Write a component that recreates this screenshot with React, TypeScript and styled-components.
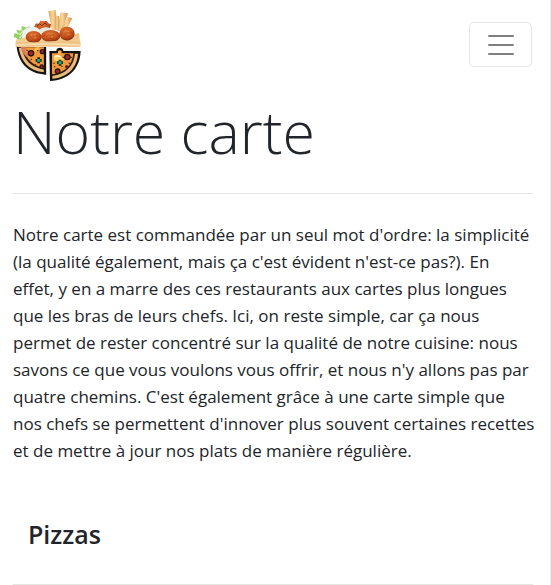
import React from 'react';
import styled, { createGlobalStyle } from 'styled-components';

const GlobalStyle = createGlobalStyle`
  * { box-sizing: border-box; }
  body {
    margin: 0;
    background: #fff;
    color: #212529;
    font-family: "Segoe UI", "Open Sans", "Noto Sans", sans-serif;
    font-size: 17px;
    line-height: 27px;
  }
`;

const Page = styled.div`
  min-height: 100vh;
  padding: 8px 14px 0 13px;
  border-right: 1px solid #efefef;
  overflow: hidden;
`;

const Navbar = styled.nav`
  display: flex;
  align-items: flex-start;
  justify-content: space-between;
  margin-right: 3px;
`;

const Brand = styled.a`
  display: block;
  line-height: 0;
`;

const Toggler = styled.button`
  display: flex;
  align-items: center;
  justify-content: center;
  width: 63px;
  height: 45px;
  padding: 0;
  margin: 14px 1px 0 0;
  background: transparent;
  border: 1px solid #e5e5e5;
  border-radius: 5px;
  cursor: pointer;
`;

const Title = styled.h1`
  margin: 12px 0 24px;
  font-size: 59px;
  font-weight: 300;
  line-height: 75px;
`;

const Rule = styled.hr`
  margin: 0 3px 0 0;
  border: 0;
  border-top: 1px solid #e5e5e5;
`;

const Intro = styled.p`
  margin: 27px 0 54px;
`;

const Section = styled.section`
  display: flex;
  flex-direction: column;
  gap: 34px;
`;

const SectionTitle = styled.h2`
  margin: 0;
  padding: 0 15px;
  font-size: 25px;
  font-weight: 600;
  line-height: 32px;
`;

function Pepper({ x, y, r = 8 }: { x: number; y: number; r?: number }) {
  return <circle cx={x} cy={y} r={r} fill="#9c2a26" stroke="#2b1511" strokeWidth="4" />;
}

function Olive({ x, y }: { x: number; y: number }) {
  return (
    <>
      <path d={`M${x - 4} ${y - 9}h8v5h5v8h-5v5h-8v-5h-5v-8h5z`} fill="#142b20" />
      <circle cx={x} cy={y} r="5" fill="#27a775" />
    </>
  );
}

function Ball({ x, y, rx, ry }: { x: number; y: number; rx: number; ry: number }) {
  return (
    <g>
      <ellipse cx={x} cy={y} rx={rx} ry={ry} fill="url(#fried)" />
      <path
        d={`M${x - rx + 5} ${y + 2}l7-5 5 6 6-8 7 5 5-6 4 7M${x - 9} ${y + 10}l7-4 6 4 7-6`}
        fill="none"
        stroke="#8c2c10"
        strokeWidth="2"
        opacity=".5"
      />
      <path d={`M${x - 10} ${y - 4}l5-4m6 3 5-3m-4 11 5-2`} stroke="#e88a45" strokeWidth="3" />
    </g>
  );
}

function Logo() {
  return (
    <svg width="72" height="74" viewBox="39 24 216 222" role="img" aria-label="Accueil">
      <defs>
        <radialGradient id="fried" cx="45%" cy="35%" r="65%">
          <stop offset="0" stopColor="#e07a35" />
          <stop offset=".6" stopColor="#c9531d" />
          <stop offset="1" stopColor="#842810" />
        </radialGradient>
        <linearGradient id="board" x1="0" y1="0" x2="0" y2="1">
          <stop offset="0" stopColor="#edbd7b" />
          <stop offset="1" stopColor="#f7d8a5" />
        </linearGradient>
        <linearGradient id="stick">
          <stop offset="0" stopColor="#dfa45c" />
          <stop offset=".5" stopColor="#fbd799" />
          <stop offset="1" stopColor="#cf8a45" />
        </linearGradient>
      </defs>
      <g fill="url(#stick)">
        <path d="M145 34l22-4 6 54-17 10z" />
        <path d="M182 37l22 3-18 54-16-3z" />
        <path d="M202 51l15 3-19 38-14-7z" />
        <path d="M168 47l9 1-1 44-10-2z" />
      </g>
      <path d="M42 101l11-3-4-9 15 3 1-14 14 5 10-5 1 38-36 7-3-9-9-2z" fill="#92cf67" />
      <path d="M49 99l12 4 9-13m-12 24 14-13" stroke="#d7efb5" strokeWidth="4" fill="none" />
      <path d="M102 82l6-12 8 1 6-9 8 2 10-1 5 7 8 3-4 17-22 6-18-3z" fill="url(#fried)" />
      <path d="M111 78l8-6 7 5 9-8 7 7" fill="none" stroke="#793015" strokeWidth="3" />
      <path d="M68 97c6-19 45-24 54-3l-5 30H65z" fill="#f0f1ea" />
      <path d="M116 91c13-14 38-12 43 3l-28 18z" fill="#e6e8df" />
      <path d="M49 119l26-6h118l44-14 5 40H47z" fill="url(#board)" />
      <Ball x={101} y={111} rx={24} ry={18} />
      <Ball x={201} y={101} rx={23} ry={21} />
      <Ball x={152} y={108} rx={29} ry={18} />
      <path d="M47 125q42 3 85 0 55-5 109-1v17q-98-3-194 0z" fill="#edc386" />
      <path d="M49 135q90-6 191 0" fill="none" stroke="#f9dfb4" strokeWidth="4" />

      <path d="M50 141h88v83c-53-3-82-34-88-83z" fill="#151211" />
      <path d="M56 143h76v74c-44-4-69-31-76-74z" fill="#e8bb79" />
      <path d="M65 142h67v67c-38-6-62-29-67-67z" fill="#33190f" />
      <path d="M70 142h62v62c-34-6-55-27-62-62z" fill="#f19a3c" />
      <path d="M62 141h17l-4 12 8 13-4 6c-9-10-14-19-17-31z" fill="#d57c65" />
      <path d="M106 143l12-2-4 10-12 5z" fill="#ffc349" />
      <Pepper x={93} y={160} />
      <Pepper x={127} y={155} r={6} />
      <Pepper x={125} y={200} r={5} />
      <Olive x={116} y={181} />
      <path d="M79 151h4m28 1h4m-23 26h4m9 17h4" stroke="#512917" strokeWidth="4" />
      <path d="M135 141v82" stroke="#151211" strokeWidth="7" />

      <path d="M148 153h21c0-13 21-13 21 0h52c-2 54-37 88-92 90z" fill="#151211" />
      <path d="M156 161h78c-3 43-32 71-77 75z" fill="#e8bb79" />
      <path d="M156 160h69c-3 38-28 64-69 68z" fill="#33190f" />
      <path d="M156 160h64c-3 35-25 59-64 63z" fill="#f19a3c" />
      <path d="M174 154q5-7 11 0v10h-11z" fill="#efad4b" />
      <path d="M162 169h21l9 9-12 8-19-5z" fill="#ffd36a" />
      <path d="M163 170q9-5 19 1" stroke="#fff3d5" strokeWidth="5" fill="none" />
      <Pepper x={202} y={171} />
      <Pepper x={173} y={214} r={7} />
      <Olive x={180} y={188} />
      <path d="M160 190h4m24-18h4m20 0h4m-10 18h4m-26 9h4m-26 1h4" stroke="#512917" strokeWidth="4" />
      <circle cx="200" cy="200" r="5" fill="#64241b" />
    </svg>
  );
}

export default function App() {
  return (
    <>
      <GlobalStyle />
      <Page>
        <Navbar>
          <Brand href="#">
            <Logo />
          </Brand>
          <Toggler type="button" aria-label="Menu">
            <svg width="32" height="32" viewBox="0 0 32 32" aria-hidden="true">
              <path
                d="M4 7h24M4 16h24M4 25h24"
                stroke="rgba(0,0,0,.5)"
                strokeWidth="2"
                strokeLinecap="round"
                strokeMiterlimit="10"
              />
            </svg>
          </Toggler>
        </Navbar>
        <main>
          <Title>Notre carte</Title>
          <Rule />
          <Intro>
            Notre carte est commandée par un seul mot d'ordre: la simplicité (la qualité également,
            mais ça c'est évident n'est-ce pas?). En
            <br />
            effet, y en a marre des ces restaurants aux cartes plus longues que les bras de leurs
            chefs. Ici, on reste simple, car ça nous permet de rester concentré sur la qualité de
            notre cuisine: nous savons ce que vous voulons vous offrir, et nous n'y allons pas par
            quatre chemins. C'est également grâce à une carte simple que nos chefs se permettent
            d'innover plus souvent certaines recettes et de mettre à jour nos plats de manière
            régulière.
          </Intro>
          <Section>
            <SectionTitle>Pizzas</SectionTitle>
            <Rule />
          </Section>
        </main>
      </Page>
    </>
  );
}
